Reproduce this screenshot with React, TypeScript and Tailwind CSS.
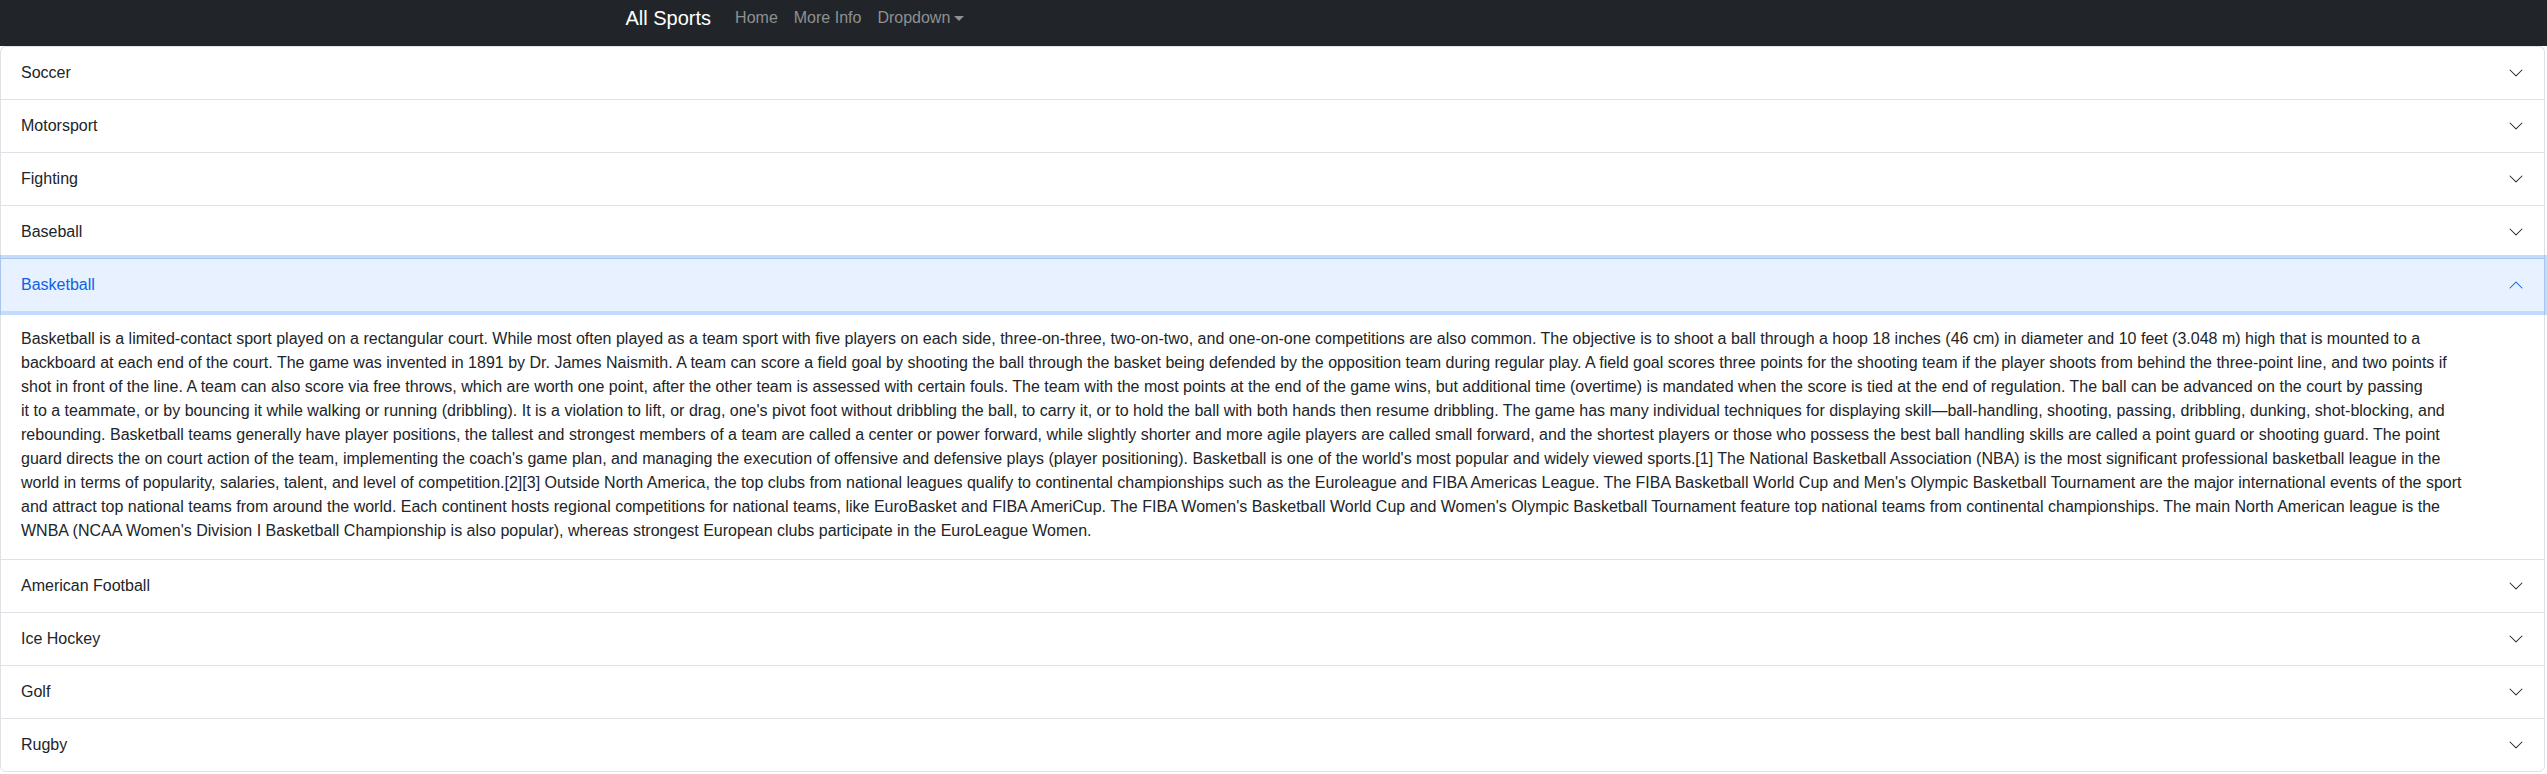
const sports = [
  "Soccer",
  "Motorsport",
  "Fighting",
  "Baseball",
  "Basketball",
  "American Football",
  "Ice Hockey",
  "Golf",
  "Rugby",
];

// line breaks follow the reference wrapping
const basketballLines = [
  "Basketball is a limited-contact sport played on a rectangular court. While most often played as a team sport with five players on each side, three-on-three, two-on-two, and one-on-one competitions are also common. The objective is to shoot a ball through a hoop 18 inches (46 cm) in diameter and 10 feet (3.048 m) high that is mounted to a",
  "backboard at each end of the court. The game was invented in 1891 by Dr. James Naismith. A team can score a field goal by shooting the ball through the basket being defended by the opposition team during regular play. A field goal scores three points for the shooting team if the player shoots from behind the three-point line, and two points if",
  "shot in front of the line. A team can also score via free throws, which are worth one point, after the other team is assessed with certain fouls. The team with the most points at the end of the game wins, but additional time (overtime) is mandated when the score is tied at the end of regulation. The ball can be advanced on the court by passing",
  "it to a teammate, or by bouncing it while walking or running (dribbling). It is a violation to lift, or drag, one's pivot foot without dribbling the ball, to carry it, or to hold the ball with both hands then resume dribbling. The game has many individual techniques for displaying skill\u2014ball-handling, shooting, passing, dribbling, dunking, shot-blocking, and",
  "rebounding. Basketball teams generally have player positions, the tallest and strongest members of a team are called a center or power forward, while slightly shorter and more agile players are called small forward, and the shortest players or those who possess the best ball handling skills are called a point guard or shooting guard. The point",
  "guard directs the on court action of the team, implementing the coach's game plan, and managing the execution of offensive and defensive plays (player positioning). Basketball is one of the world's most popular and widely viewed sports.[1] The National Basketball Association (NBA) is the most significant professional basketball league in the",
  "world in terms of popularity, salaries, talent, and level of competition.[2][3] Outside North America, the top clubs from national leagues qualify to continental championships such as the Euroleague and FIBA Americas League. The FIBA Basketball World Cup and Men's Olympic Basketball Tournament are the major international events of the sport",
  "and attract top national teams from around the world. Each continent hosts regional competitions for national teams, like EuroBasket and FIBA AmeriCup. The FIBA Women's Basketball World Cup and Women's Olympic Basketball Tournament feature top national teams from continental championships. The main North American league is the",
  "WNBA (NCAA Women's Division I Basketball Championship is also popular), whereas strongest European clubs participate in the EuroLeague Women.",
];

const Chevron = ({ open }: { open: boolean }) => (
  <svg
    viewBox="0 0 16 16"
    className={open ? "w-4 h-4 rotate-180 shrink-0" : "w-4 h-4 shrink-0"}
    fill={open ? "#0c63e4" : "#212529"}
  >
    <path
      fillRule="evenodd"
      d="M1.646 4.646a.5.5 0 0 1 .708 0L8 10.293l5.646-5.647a.5.5 0 0 1 .708.708l-6 6a.5.5 0 0 1-.708 0l-6-6a.5.5 0 0 1 0-.708z"
    />
  </svg>
);

const Navbar = () => (
  <nav className="bg-[#212529] h-[46px]">
    <div className="max-w-[1320px] mx-auto px-3 h-[36px] flex items-center">
      <span className="text-white text-[20px] mr-4">All Sports</span>
      <div className="flex items-center text-[16px] text-[#8e9092]">
        <span className="px-2">Home</span>
        <span className="px-2">More Info</span>
        <span className="px-2 flex items-center">
          Dropdown
          <span className="ml-[4px] w-0 h-0 border-t-[5px] border-t-[#8e9092] border-x-[5px] border-x-transparent"></span>
        </span>
      </div>
    </div>
  </nav>
);

const AccordionItem = ({
  title,
  open,
  first,
  last,
}: {
  title: string;
  open: boolean;
  first: boolean;
  last: boolean;
}) => (
  <div
    className={
      "bg-white border-x border-t border-[#dee2e6]" +
      (first ? " rounded-t-[6px]" : "") +
      (last ? " border-b rounded-b-[6px]" : "")
    }
  >
    <button
      className={
        open
          ? "relative z-10 w-full flex items-center justify-between px-5 py-[14px] text-left text-[16px] leading-6 bg-[#e7f1ff] text-[#0c63e4] shadow-[0_0_0_4px_rgba(13,110,253,0.25)]"
          : "w-full flex items-center justify-between px-5 py-[14px] text-left text-[16px] leading-6 text-[#212529]" +
            (first ? " rounded-t-[6px]" : "")
      }
    >
      <span>{title}</span>
      <Chevron open={open} />
    </button>
    {open && (
      <div className="px-5 py-4 text-[16px] leading-6 text-[#212529]">
        {basketballLines.map((line, i) => (
          <span key={i} className="block">
            {line}
          </span>
        ))}
      </div>
    )}
  </div>
);

export default function App() {
  return (
    <div className="bg-white min-h-[774px] font-['Liberation_Sans',Arial,sans-serif]">
      <Navbar />
      <div className="pr-[2px]">
        {sports.map((s, i) => (
          <AccordionItem
            key={s}
            title={s}
            open={s === "Basketball"}
            first={i === 0}
            last={i === sports.length - 1}
          />
        ))}
      </div>
    </div>
  );
}
